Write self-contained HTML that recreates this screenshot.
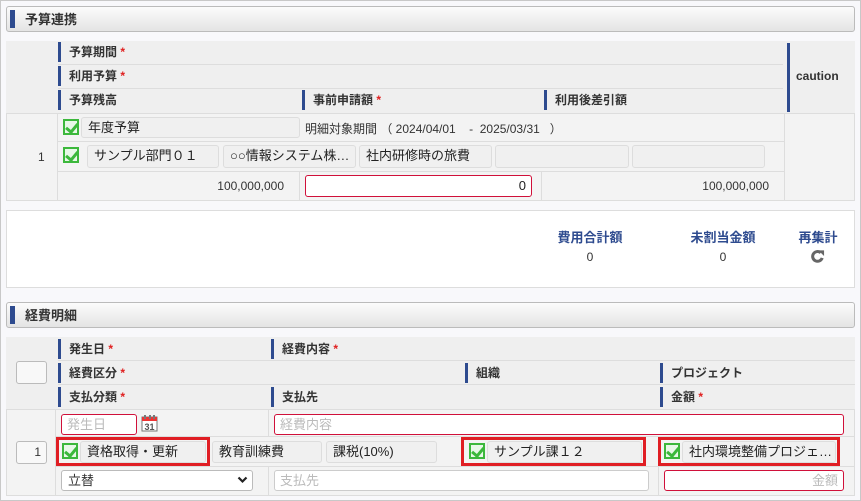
<!DOCTYPE html>
<html><head><meta charset="utf-8"><style>
*{box-sizing:border-box;margin:0;padding:0}
body{width:861px;height:501px;background:#f8f8fb;font-family:"Liberation Sans","Noto Sans CJK JP",sans-serif;font-size:12px;color:#333;position:relative;overflow:hidden}
.a{position:absolute}
.sh{position:absolute;left:6px;width:849px;height:26px;border:1px solid #bbb;border-radius:3px;background:linear-gradient(#fcfcfc,#e4e4e4)}
.sh b{position:absolute;left:3px;top:3px;width:5px;height:18px;background:#2e4b8f}
.sh span{position:absolute;left:18px;top:2px;font-weight:bold;font-size:13px;color:#333}
.hd{background:#efefef}
.hl{position:absolute;font-weight:bold;font-size:12px;color:#333;border-left:3px solid #2e4b8f;padding-left:8px;height:20px;line-height:20px}
.req{color:#e02020}
.box{position:absolute;background:#f0f0f0;border:1px solid #ddd;border-radius:3px;font-size:13px;line-height:20px;padding-left:6px;white-space:nowrap;overflow:hidden;color:#222}
.cb{position:absolute;width:16px;height:16px;border:2px solid #3cb83c;background:#e8f8e8}
.cb:after{content:"";position:absolute;left:3px;top:0px;width:5px;height:9px;border:solid #3cb83c;border-width:0 3px 3px 0;transform:rotate(40deg)}
.inp{position:absolute;background:#fff;border:1px solid #d0103a;border-radius:3px;font-size:13px;color:#bbb;padding:0 5px;line-height:19px}
.red{position:absolute;border:3px solid #e01e24}
.line{position:absolute;background:#ddd}
</style></head><body>
<div class="a" style="left:0;top:0;width:861px;height:501px;border:1px solid #c8c8c8"></div>
<div class="sh" style="top:6px"><b></b><span>予算連携</span></div>

<div class="a hd" style="left:6px;top:41px;width:849px;height:72px"></div>
<div class="line" style="left:58px;top:64px;width:725px;height:1px"></div>
<div class="line" style="left:58px;top:88px;width:725px;height:1px"></div>
<div class="hl" style="left:58px;top:42px">予算期間 <span class="req">*</span></div>
<div class="hl" style="left:58px;top:66px">利用予算 <span class="req">*</span></div>
<div class="hl" style="left:58px;top:90px">予算残高</div>
<div class="hl" style="left:302px;top:90px">事前申請額 <span class="req">*</span></div>
<div class="hl" style="left:544px;top:90px">利用後差引額</div>
<div class="a" style="left:787px;top:43px;width:3px;height:69px;background:#2e4b8f"></div>
<div class="a" style="left:796px;top:69px;font-weight:bold">caution</div>

<div class="a" style="left:6px;top:113px;width:849px;height:88px;background:#f3f3f3;border:1px solid #ddd"></div>
<div class="line" style="left:57px;top:114px;width:1px;height:86px"></div>
<div class="line" style="left:784px;top:114px;width:1px;height:86px"></div>
<div class="line" style="left:58px;top:141px;width:726px;height:1px"></div>
<div class="line" style="left:58px;top:171px;width:726px;height:1px"></div>
<div class="line" style="left:299px;top:172px;width:1px;height:28px"></div>
<div class="line" style="left:541px;top:172px;width:1px;height:28px"></div>
<div class="a" style="left:38px;top:150px">1</div>
<div class="cb" style="left:63px;top:119px"></div>
<div class="box" style="left:81px;top:117px;width:219px;height:21px">年度予算</div>
<div class="a" style="left:305px;top:120px;font-size:12px">明細対象期間 （ 2024/04/01 &nbsp;&nbsp;&nbsp;- &nbsp;2025/03/31 &nbsp;&nbsp;）</div>
<div class="cb" style="left:63px;top:147px"></div>
<div class="box" style="left:87px;top:145px;width:132px;height:23px">サンプル部門０１</div>
<div class="box" style="left:223px;top:145px;width:133px;height:23px">○○情報システム株…</div>
<div class="box" style="left:359px;top:145px;width:133px;height:23px">社内研修時の旅費</div>
<div class="box" style="left:495px;top:145px;width:134px;height:23px"></div>
<div class="box" style="left:632px;top:145px;width:133px;height:23px"></div>
<div class="a" style="left:190px;top:179px;width:94px;text-align:right">100,000,000</div>
<div class="inp" style="left:305px;top:175px;width:227px;height:22px;color:#222;text-align:right">0</div>
<div class="a" style="left:660px;top:179px;width:109px;text-align:right">100,000,000</div>

<div class="a" style="left:6px;top:210px;width:849px;height:78px;background:#fff;border:1px solid #ddd"></div>
<div class="a" style="left:550px;top:227px;width:80px;text-align:center;font-weight:bold;color:#2e4b8f;font-size:13px">費用合計額</div>
<div class="a" style="left:550px;top:250px;width:80px;text-align:center">0</div>
<div class="a" style="left:683px;top:227px;width:80px;text-align:center;font-weight:bold;color:#2e4b8f;font-size:13px">未割当金額</div>
<div class="a" style="left:683px;top:250px;width:80px;text-align:center">0</div>
<div class="a" style="left:788px;top:227px;width:60px;text-align:center;font-weight:bold;color:#2e4b8f;font-size:13px">再集計</div>
<svg class="a" style="left:810px;top:249px" width="15" height="15" viewBox="0 0 16 16"><path d="M13 9.5A5.2 5.2 0 1 1 11.5 4" fill="none" stroke="#666" stroke-width="3.2"/><path d="M9 1.5L15 1.5L15 7.5Z" fill="#666"/></svg>

<div class="sh" style="top:302px"><b></b><span>経費明細</span></div>

<div class="a hd" style="left:6px;top:337px;width:849px;height:72px"></div>
<div class="line" style="left:58px;top:360px;width:797px;height:1px"></div>
<div class="line" style="left:58px;top:384px;width:797px;height:1px"></div>
<div class="a" style="left:16px;top:361px;width:31px;height:23px;border:1px solid #bbb;border-radius:3px;background:#f8f8f8"></div>
<div class="hl" style="left:58px;top:339px">発生日 <span class="req">*</span></div>
<div class="hl" style="left:271px;top:339px">経費内容 <span class="req">*</span></div>
<div class="hl" style="left:58px;top:363px">経費区分 <span class="req">*</span></div>
<div class="hl" style="left:465px;top:363px">組織</div>
<div class="hl" style="left:660px;top:363px">プロジェクト</div>
<div class="hl" style="left:58px;top:387px">支払分類 <span class="req">*</span></div>
<div class="hl" style="left:271px;top:387px">支払先</div>
<div class="hl" style="left:660px;top:387px">金額 <span class="req">*</span></div>

<div class="a" style="left:6px;top:409px;width:849px;height:87px;background:#f3f3f3;border:1px solid #ddd"></div>
<div class="line" style="left:55px;top:410px;width:1px;height:85px"></div>
<div class="line" style="left:56px;top:436px;width:798px;height:1px"></div>
<div class="line" style="left:56px;top:466px;width:798px;height:1px"></div>
<div class="line" style="left:268px;top:410px;width:1px;height:26px"></div>
<div class="line" style="left:268px;top:467px;width:1px;height:28px"></div>
<div class="line" style="left:658px;top:467px;width:1px;height:28px"></div>
<div class="inp" style="left:61px;top:414px;width:76px;height:21px">発生日</div>
<svg class="a" style="left:141px;top:414px" width="17" height="18" viewBox="0 0 17 18"><rect x="1" y="3" width="15" height="14" fill="#fff" stroke="#777"/><rect x="1" y="3" width="15" height="4" fill="#e33"/><rect x="3" y="1" width="2" height="4" fill="#777"/><rect x="8" y="1" width="2" height="4" fill="#777"/><rect x="12" y="1" width="2" height="4" fill="#777"/><text x="8.5" y="16" font-size="9" font-weight="bold" text-anchor="middle" fill="#555" font-family="Liberation Sans">31</text></svg>
<div class="inp" style="left:274px;top:414px;width:570px;height:21px">経費内容</div>
<div class="a" style="left:16px;top:441px;width:31px;height:23px;border:1px solid #bbb;border-radius:3px;background:#f8f8f8;text-align:right;padding-right:5px;line-height:21px">1</div>
<div class="red" style="left:56px;top:437px;width:154px;height:29px"></div>
<div class="cb" style="left:62px;top:443px"></div>
<div class="box" style="left:80px;top:441px;width:126px;height:22px">資格取得・更新</div>
<div class="box" style="left:212px;top:441px;width:110px;height:22px">教育訓練費</div>
<div class="box" style="left:326px;top:441px;width:111px;height:22px">課税(10%)</div>
<div class="red" style="left:461px;top:437px;width:185px;height:29px"></div>
<div class="cb" style="left:469px;top:443px"></div>
<div class="box" style="left:487px;top:441px;width:155px;height:22px">サンプル課１２</div>
<div class="red" style="left:658px;top:437px;width:182px;height:29px"></div>
<div class="cb" style="left:664px;top:443px"></div>
<div class="box" style="left:682px;top:441px;width:154px;height:22px">社内環境整備プロジェ…</div>
<div class="a" style="left:61px;top:470px;width:192px;height:21px;background:#fff;border:1px solid #bbb;border-radius:3px;font-size:13px;padding-left:6px;line-height:19px">立替</div>
<svg class="a" style="left:237px;top:476px" width="11" height="8" viewBox="0 0 11 8"><path d="M1.5 1.5L5.5 5.5L9.5 1.5" fill="none" stroke="#222" stroke-width="2.2"/></svg>
<div class="inp" style="left:274px;top:470px;width:375px;height:21px;border-color:#ccc">支払先</div>
<div class="inp" style="left:664px;top:470px;width:180px;height:21px;text-align:right">金額</div>
</body></html>
